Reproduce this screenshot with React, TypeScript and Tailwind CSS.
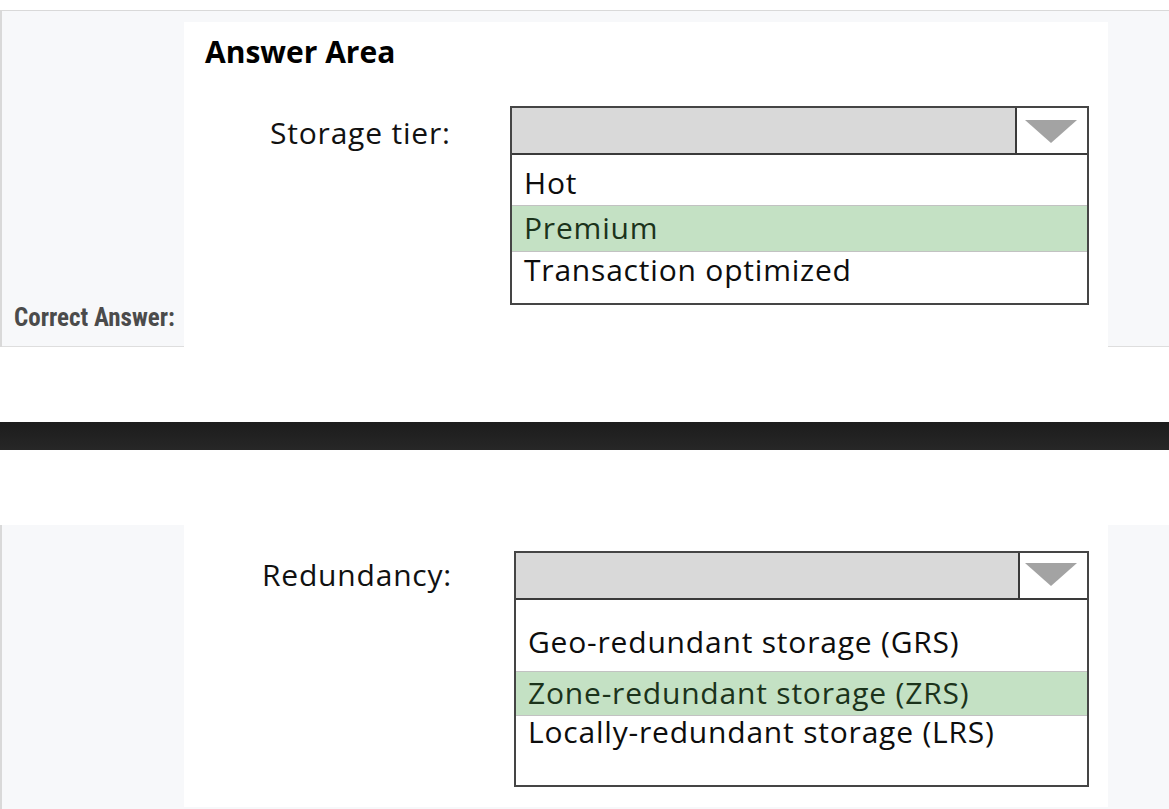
import React from 'react';

interface Row {
  label: string;
  h: number;
  pt: number;
  selected?: boolean;
}

interface DropdownProps {
  grayW: string;
  cellW: string;
  triClass: string;
  textPl: string;
  rows: Row[];
  width: string;
}

const Triangle = ({ className }: { className: string }) => (
  <svg width="52" height="23" viewBox="0 0 52 23" className={className}>
    <polygon points="0,0 52,0 26,23" fill="#a3a3a3" />
  </svg>
);

// row heights differ a little, so they come from the data
function Dropdown({ grayW, cellW, triClass, textPl, rows, width }: DropdownProps) {
  return (
    <div className={`${width} shrink-0 border-2 border-[#454545] bg-white`}>
      <div className="flex h-[47px] border-b-2 border-[#3a3a3a]">
        <div className={`${grayW} shrink-0 bg-[#d9d9d9]`} />
        <div className={`${cellW} shrink-0 border-l-2 border-[#3a3a3a] bg-white`}>
          <Triangle className={triClass} />
        </div>
      </div>
      {rows.map((r, i) => (
        <div
          key={r.label}
          className={`${textPl} text-[30px] leading-[30px] tracking-[0.8px] ${
            r.selected ? 'bg-[#c4e1c4] text-[#1b331b]' : 'text-[#0d0d0d]'
          } ${i < rows.length - 1 ? 'border-b border-[#c2c2c2]' : ''}`}
          style={{ height: r.h, paddingTop: r.pt }}
        >
          {r.label}
        </div>
      ))}
    </div>
  );
}

export default function App() {
  return (
    <div className="min-h-screen bg-white pt-[10px] font-['Open_Sans',sans-serif]">
      {/* first part */}
      <section className="flex border-t border-l-2 border-[#d9d9d9] bg-[#f7f8fa]">
        <div className="flex w-[182px] shrink-0 flex-col justify-end border-b border-[#dedede] pb-[15px] pl-[12px]">
          <span className="whitespace-nowrap font-['Liberation_Sans_Narrow','Roboto_Condensed',sans-serif] text-[25px] font-bold leading-[26px] text-[#4b4b4b]">
            Correct Answer:
          </span>
        </div>
        <div className="mt-[11px] h-[325px] w-[924px] shrink-0 bg-white">
          <div className="pt-[15px] pl-[21px] text-[30px] font-bold leading-[30px] text-black">
            Answer Area
          </div>
          <div className="mt-[39px] flex">
            <div className="w-[326px] shrink-0 pl-[86px] pt-[12px] text-[30px] leading-[30px] tracking-[0.8px] text-[#111]">
              Storage tier:
            </div>
            <Dropdown
              width="w-[579px]"
              grayW="w-[503px]"
              cellW="w-[70px]"
              triClass="ml-[8px] mt-[12px]"
              textPl="pl-[12px]"
              rows={[
                { label: 'Hot', h: 51, pt: 13 },
                { label: 'Premium', h: 46, pt: 7, selected: true },
                { label: 'Transaction optimized', h: 51, pt: 3 },
              ]}
            />
          </div>
        </div>
        <div className="flex-1 border-b border-[#dedede]" />
      </section>

      <div className="mt-[75px] h-[28px] bg-linear-to-b from-[#1c1c1c] to-[#272727]" />

      {/* second part */}
      <section className="mt-[75px] flex border-l-2 border-[#d9d9d9] bg-[#f7f8fa] pb-[10px]">
        <div className="w-[182px] shrink-0" />
        <div className="h-[282px] w-[924px] shrink-0 bg-white">
          <div className="flex pt-[26px]">
            <div className="w-[330px] shrink-0 pl-[78px] pt-[9px] text-[30px] leading-[30px] tracking-[0.8px] text-[#111]">
              Redundancy:
            </div>
            <Dropdown
              width="w-[575px]"
              grayW="w-[502px]"
              cellW="w-[67px]"
              triClass="ml-[5px] mt-[10px]"
              textPl="pl-[12px]"
              rows={[
                { label: 'Geo-redundant storage (GRS)', h: 72, pt: 27 },
                { label: 'Zone-redundant storage (ZRS)', h: 44, pt: 6, selected: true },
                { label: 'Locally-redundant storage (LRS)', h: 69, pt: 1 },
              ]}
            />
          </div>
        </div>
        <div className="flex-1" />
      </section>
    </div>
  );
}
